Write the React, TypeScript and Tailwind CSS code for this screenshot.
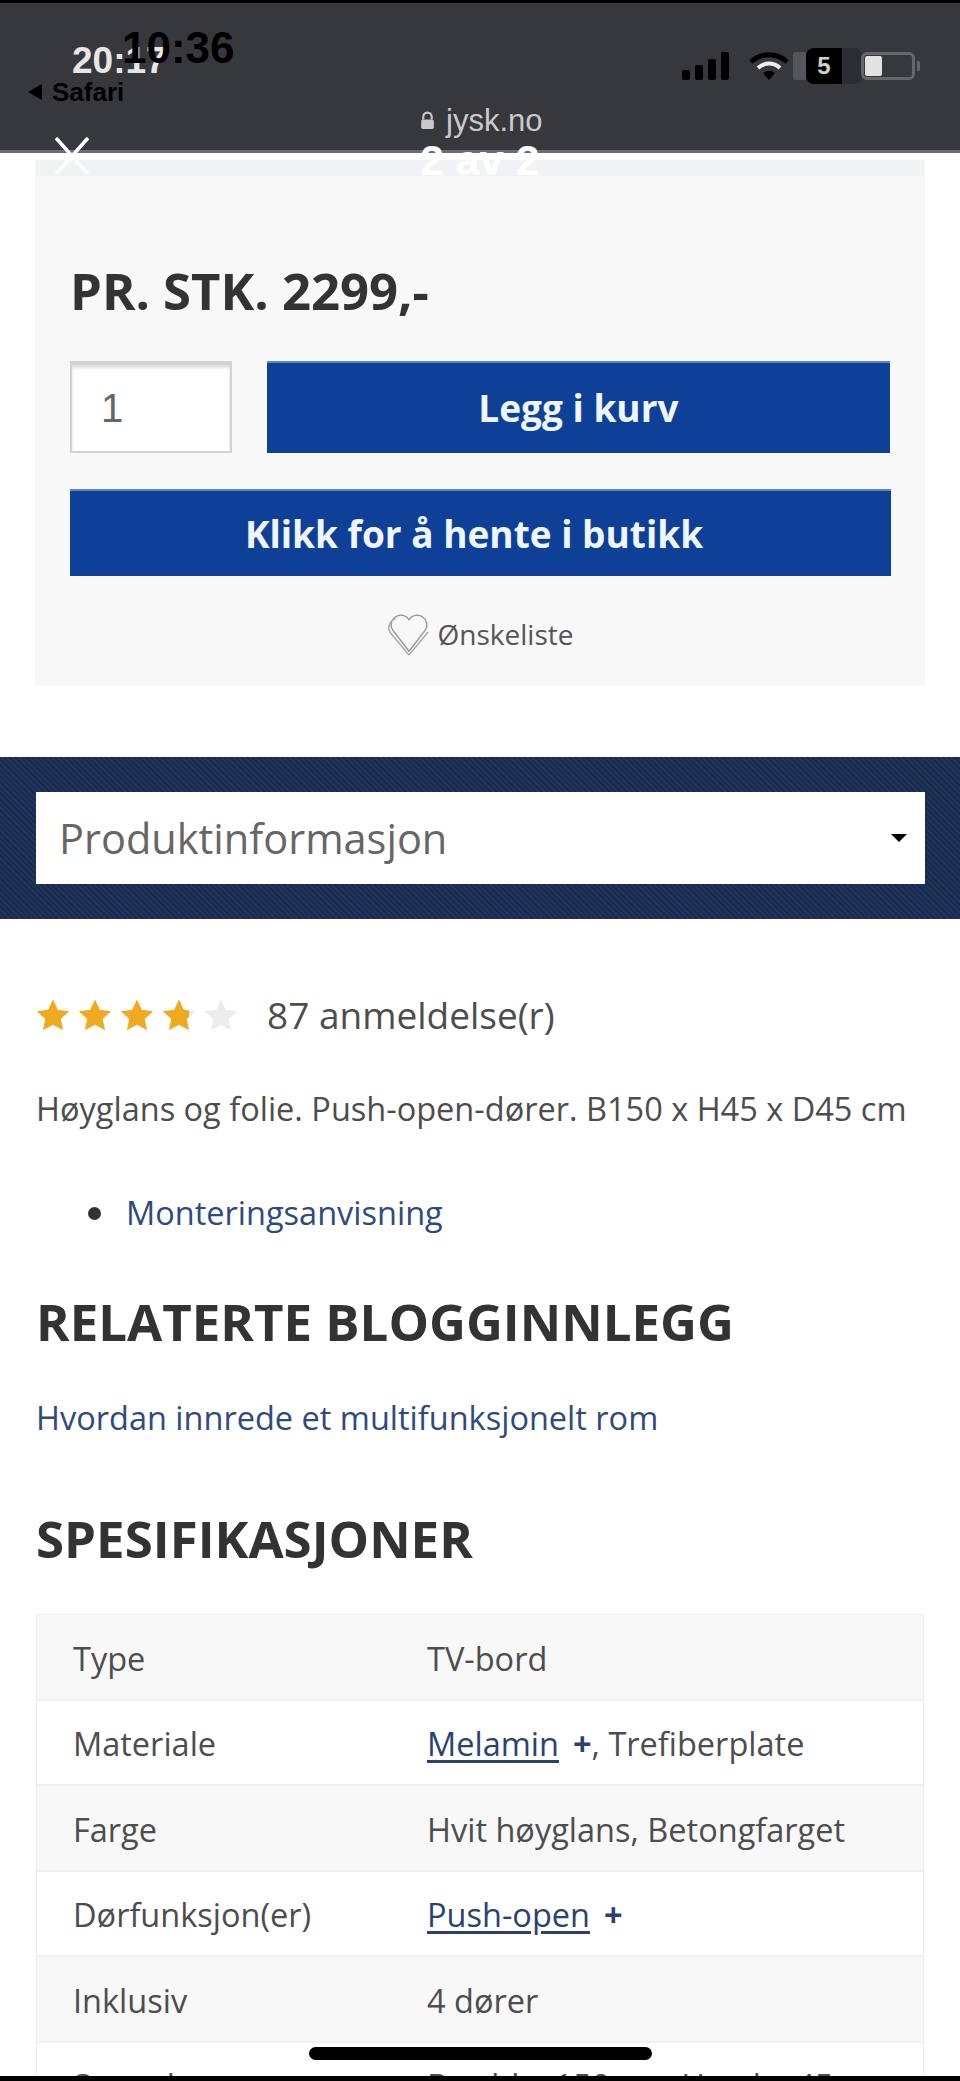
const openSans = "font-['Open_Sans',sans-serif]";

const specs = [
  { label: "Type", value: <>TV-bord</> },
  {
    label: "Materiale",
    value: (
      <>
        <a className="text-[#2b4270] underline underline-offset-4">Melamin</a>
        <span className="ml-[14px] font-bold text-[#2b4270]">+</span>, Trefiberplate
      </>
    ),
  },
  { label: "Farge", value: <>Hvit høyglans, Betongfarget</> },
  {
    label: "Dørfunksjon(er)",
    value: (
      <>
        <a className="text-[#2b4270] underline underline-offset-4">Push-open</a>
        <span className="ml-[14px] font-bold text-[#2b4270]">+</span>
      </>
    ),
  },
  { label: "Inklusiv", value: <>4 dører</> },
  { label: "Størrelse", value: <>Bredde: 150 cm, Høyde: 45 cm</> },
];

function Star({ fill }: { fill: "full" | "part" | "empty" }) {
  const id = "star-part";
  return (
    <svg viewBox="0 0 24 24" className="h-[34px] w-[34px]">
      {fill === "part" && (
        <defs>
          <linearGradient id={id}>
            <stop offset="80%" stopColor="#f0aa1f" />
            <stop offset="80%" stopColor="#ececec" />
          </linearGradient>
        </defs>
      )}
      <path
        d="M12 1L15.400 8.300L23.400 9.300L17.500 14.800L19.100 22.700L12 18.800L4.900 22.700L6.500 14.800L0.600 9.300L8.600 8.300Z"
        fill={fill === "full" ? "#f0aa1f" : fill === "part" ? `url(#${id})` : "#ececec"}
      />
    </svg>
  );
}

function Header() {
  return (
    <header className="relative z-10 h-[153px] shrink-0 border-t-[3px] border-b-[3px] border-t-black border-b-[#6c6d70] bg-[#37383c]">
      {/* two screenshots on top of each other, hence the doubled status bar */}
      <span className="absolute left-[72px] top-[39px] font-['Liberation_Sans',sans-serif] text-[37px] font-bold leading-none text-[#e6e6e6]">
        20:17
      </span>
      <span className="absolute left-[122px] top-[23px] font-['Liberation_Sans',sans-serif] text-[44px] font-bold leading-none text-black">
        10:36
      </span>
      <div className="absolute left-[28px] top-[76px] flex items-center gap-[10px] font-['Liberation_Sans',sans-serif] text-[26px] font-bold leading-none text-black">
        <span className="h-0 w-0 border-y-[8px] border-r-[14px] border-y-transparent border-r-black" />
        Safari
      </div>
      <div className="absolute left-[682px] top-[45px] flex items-center">
        <svg viewBox="0 0 48 28" className="h-[28px] w-[48px]">
          <rect x="0" y="18" width="8" height="10" rx="2" fill="#000" />
          <rect x="13" y="13" width="8" height="15" rx="2" fill="#000" />
          <rect x="26" y="7" width="8" height="21" rx="2" fill="#000" />
          <rect x="39" y="0" width="8" height="28" rx="2" fill="#000" />
        </svg>
        <svg viewBox="0 0 40 30" className="ml-[19px] h-[30px] w-[40px]">
          <path d="M2 11a26 26 0 0 1 36 0" fill="none" stroke="#000" strokeWidth="5" />
          <path d="M9 17a16 16 0 0 1 22 0" fill="none" stroke="#eee" strokeWidth="4" />
          <path d="M14 22a9 9 0 0 1 12 0l-6 7z" fill="#000" />
        </svg>
        <div className="ml-[4px] h-[28px] w-[13px] rounded-[2px] bg-[#55565a]" />
        <div className="flex h-[36px] w-[36px] items-center justify-center rounded-l-[8px] bg-black font-['Liberation_Sans',sans-serif] text-[24px] font-bold leading-none text-[#cfcfcf]">
          5
        </div>
        <div className="h-[36px] w-[20px] rounded-r-[8px] bg-[#2c2d30]" />
        <div className="ml-[-1px] flex h-[28px] w-[54px] items-center rounded-[6px] border-[3px] border-[#66676a] p-[1px]">
          <div className="h-full w-[17px] rounded-[2px] bg-[#e2e2e2]" />
        </div>
        <div className="ml-[2px] h-[10px] w-[3px] rounded-r-[2px] bg-[#66676a]" />
      </div>
      <div className="absolute left-[420px] top-[102px] flex items-center gap-[11px] font-['Liberation_Sans',sans-serif] text-[31px] leading-none text-[#c9c9cb]">
        <svg viewBox="0 0 14 18" className="h-[19px] w-[15px]">
          <path d="M3 8V5.500a4 4 0 0 1 8 0V8" fill="none" stroke="#c9c9cb" strokeWidth="2" />
          <rect x="1" y="8" width="12" height="9" rx="1.500" fill="#c9c9cb" />
        </svg>
        jysk.no
      </div>
      <svg viewBox="0 0 36 40" className="absolute left-[54px] top-[133px] h-[40px] w-[36px]">
        <path d="M2 2l32 36M34 2L2 38" fill="none" stroke="#fff" strokeWidth="3.500" />
      </svg>
      <span className="absolute left-[420px] top-[136px] font-['Liberation_Sans',sans-serif] text-[43px] font-bold leading-none text-white">
        2 av 2
      </span>
    </header>
  );
}

export default function App() {
  return (
    <div className={`relative flex h-[2081px] w-[960px] flex-col overflow-hidden bg-white ${openSans}`}>
      <Header />

      {/* buy box */}
      <section className="mx-[35px] mt-[7px] h-[526px] shrink-0 border-t-[16px] border-[#f0f2f5] bg-[#f8f8f8] px-[35px] pt-[89px]">
        <div className="text-[50.800px] font-bold leading-[52px] text-[#333]">PR. STK. 2299,-</div>
        <div className="mt-[44px] flex gap-[35px]">
          <div className="flex h-[92px] w-[162px] items-center border-2 border-t-[4px] border-[#d2d2d2] bg-white pl-[29px] font-['Liberation_Sans',sans-serif] text-[40px] text-[#666] shadow-[inset_0_3px_3px_#ddd]">
            1
          </div>
          <button className="flex h-[92px] w-[624px] items-center justify-center border-t-2 border-[#5c88c9] bg-[#0f4098] text-[37px] font-bold text-[#f0f6ff]">
            Legg i kurv
          </button>
        </div>
        <button className="mt-[36px] flex h-[87px] w-[821px] items-center justify-center border-t-2 border-[#5c88c9] bg-[#0f4098] pr-[13px] text-[37px] font-bold text-[#f0f6ff]">
          Klikk for å hente i butikk
        </button>
        <div className="mt-[35px] flex items-center justify-center gap-[7px] text-[28px] leading-[36px] text-[#555]">
          <svg viewBox="0 0 44 48" className="h-[46px] w-[44px]">
            <path
              d="M22 42L5 20a10 10 0 0 1 17-11 10 10 0 0 1 17 11z"
              fill="none"
              stroke="#999"
              strokeWidth="1.500"
            />
            <path
              d="M22 46L2 22a10 10 0 0 1 6-14M42 22L22 46"
              fill="none"
              stroke="#aaa"
              strokeWidth="1.500"
            />
          </svg>
          Ønskeliste
        </div>
      </section>

      {/* section selector */}
      <div className="mt-[71px] shrink-0 bg-[#1a2b4d] bg-[repeating-linear-gradient(45deg,#1a2b4d_0px,#1a2b4d_2px,#20335a_2px,#20335a_4px)] px-[36px] py-[35px]">
        <div className="flex h-[92px] w-[889px] items-center justify-between bg-white pl-[23px] pr-[18px] text-[41.500px] text-[#666]">
          Produktinformasjon
          <span className="h-0 w-0 border-x-[8px] border-t-[8px] border-x-transparent border-t-black" />
        </div>
      </div>

      <main className="flex flex-1 flex-col px-[36px]">
        <div className="mt-[72px] flex items-center">
          <div className="flex gap-[8px]">
            <Star fill="full" />
            <Star fill="full" />
            <Star fill="full" />
            <Star fill="part" />
            <Star fill="empty" />
          </div>
          <span className="ml-[29px] text-[37px] leading-[48px] text-[#4d4d4d]">87 anmeldelse(r)</span>
        </div>

        <p className="mt-[50px] whitespace-nowrap text-[32.500px] leading-[40px] text-[#4d4d4d]">
          Høyglans og folie. Push-open-dører. B150 x H45 x D45 cm
        </p>

        <div className="mt-[63px] flex items-center pl-[52px] text-[32.500px] leading-[42px] text-[#2f4a7d]">
          <span className="mr-[25px] h-[13px] w-[13px] rounded-full bg-[#333]" />
          Monteringsanvisning
        </div>

        <h2 className="mt-[55px] text-[51px] font-bold leading-[64px] text-[#333]">RELATERTE BLOGGINNLEGG</h2>

        <a className="mt-[44px] text-[32.500px] leading-[42px] text-[#2f4a7d]">Hvordan innrede et multifunksjonelt rom</a>

        <h2 className="mt-[67px] text-[51px] font-bold leading-[64px] text-[#333]">SPESIFIKASJONER</h2>

        <div className="mt-[44px] border border-[#eeeeee]">
          {specs.map((row, i) => (
            <div
              key={row.label}
              className={`flex h-[85.500px] items-center border-b-2 border-[#f1f1f1] pl-[36px] pt-[5px] text-[32.500px] text-[#4d4d4d] ${
                i % 2 === 0 ? "bg-[#f8f8f8]" : "bg-white"
              }`}
            >
              <span className="w-[354px]">{row.label}</span>
              <span>{row.value}</span>
            </div>
          ))}
        </div>
      </main>

      {/* home indicator */}
      <div className="absolute bottom-0 left-0 right-0 h-[5px] bg-black" />
      <div className="absolute left-[309px] top-[2047px] h-[13px] w-[343px] rounded-full bg-black" />
    </div>
  );
}
